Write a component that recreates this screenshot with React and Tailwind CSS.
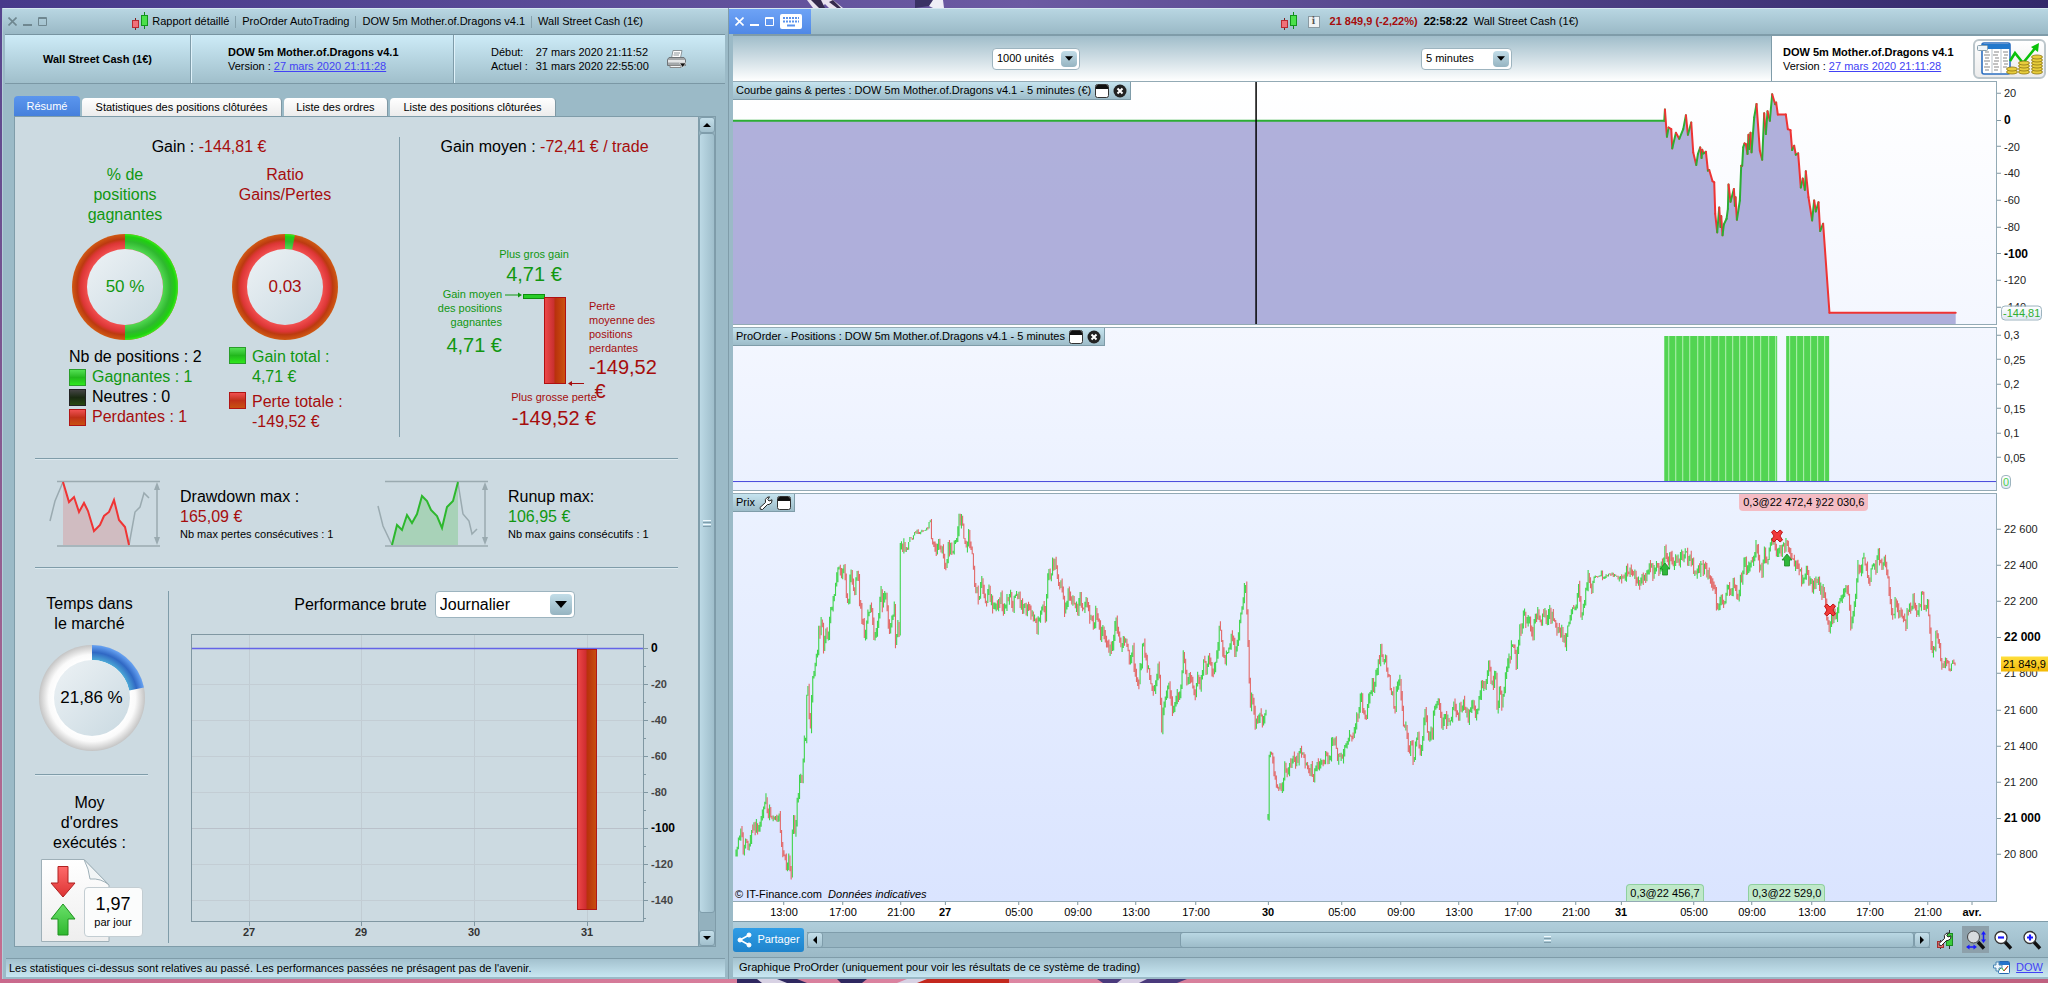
import React from "react";
import clsx from "clsx";

/* ---------------------------------------------------------------------------
   DATA
   --------------------------------------------------------------------------- */

const PLOT_W = 1264;

const timeTicks = [
  [51, "13:00"], [110, "17:00"], [168, "21:00"], [212, "27", true], [286, "05:00"],
  [345, "09:00"], [403, "13:00"], [463, "17:00"], [535, "30", true], [609, "05:00"],
  [668, "09:00"], [726, "13:00"], [785, "17:00"], [843, "21:00"], [888, "31", true],
  [961, "05:00"], [1019, "09:00"], [1079, "13:00"], [1137, "17:00"], [1195, "21:00"],
  [1239, "avr.", true],
];

const gainTicks = [20, 0, -20, -40, -60, -80, -100, -120, -140].map((v) => ({
  y: 39 - v * 1.335,
  label: String(v),
  bold: v === 0 || v === -100,
}));

const positionTicks = ["0,3", "0,25", "0,2", "0,15", "0,1", "0,05"].map((label, i) => ({
  y: 8 + i * 24.5,
  label,
}));

const priceTicks = [
  ["22 600", 36], ["22 400", 72], ["22 200", 108], ["22 000", 144, true], ["21 800", 180],
  ["21 600", 217], ["21 400", 253], ["21 200", 289], ["21 000", 325, true], ["20 800", 361],
].map(([label, y, bold]) => ({ label, y, bold }));

// equity curve, third-of-a-pixel units from the first trade
const equity = [
  [137, 86], [143, 168], [148, 140], [156, 145], [159, 203], [170, 156], [180, 174], [192, 145],
  [200, 103], [206, 162], [216, 125], [222, 215], [231, 253], [236, 220], [243, 200], [247, 232],
  [249, 207], [253, 218], [260, 213], [266, 270], [270, 268], [280, 302], [285, 305], [288, 400],
  [294, 456], [300, 381], [304, 440], [306, 407], [310, 465], [314, 432], [322, 415], [326, 385],
  [328, 312], [334, 364], [344, 325], [347, 376], [349, 350], [353, 418], [362, 360], [366, 255],
  [369, 255], [372, 200], [376, 188], [380, 190], [385, 220], [388, 162], [390, 205], [394, 156],
  [397, 215], [405, 110], [412, 69], [422, 210], [429, 237], [435, 97], [440, 160], [445, 91],
  [452, 120], [459, 40], [468, 70], [471, 65], [476, 101], [500, 101], [506, 145], [514, 148],
  [519, 208], [525, 195], [530, 222], [537, 218], [545, 321], [551, 294], [557, 328], [560, 272],
  [568, 350], [579, 420], [585, 360], [590, 393], [598, 365], [603, 452], [612, 430], [631, 698],
  [1010, 698],
];
const equityPoints = [[0, 39], [932, 39]].concat(equity.map(([x, y]) => [887 + x / 3, y / 3 - 1]));

// price path before the 30, between the 30 and its morning, then up to the end
const priceA = [
  38, 1120, 45, 1085, 48, 1050, 50, 1035, 56, 1110, 62, 1075, 66, 1100, 72, 1075, 76, 1040, 82, 1055,
  88, 1035, 93, 1055, 98, 1010, 104, 965, 108, 955, 113, 1000, 120, 990, 126, 1005, 132, 995, 138, 1005,
  142, 1010, 146, 1080, 150, 1110, 156, 1140, 160, 1180, 163, 1130, 167, 1150, 170, 1200, 171, 1090,
  174, 990, 179, 1060, 182, 990, 186, 940, 192, 870, 195, 900, 200, 790, 205, 760, 206, 650, 209, 630,
  214, 750, 218, 640, 222, 580, 224, 600, 228, 510, 231, 540, 234, 430, 238, 470, 242, 400, 247, 520,
  251, 450, 255, 490, 260, 420, 266, 380, 272, 350, 277, 300, 282, 260, 288, 290, 294, 250, 300, 340,
  303, 380, 308, 320, 312, 270, 317, 340, 322, 310, 328, 280, 333, 380, 338, 420, 345, 480, 350, 420,
  356, 370, 362, 390, 368, 480, 374, 440, 382, 330, 386, 380, 392, 330, 398, 400, 404, 460, 410, 410,
  415, 350, 417, 480, 422, 430, 426, 460, 427, 260, 429, 170, 433, 230, 436, 195, 440, 205, 446, 200,
  452, 165, 457, 175, 464, 150, 474, 155, 484, 148, 494, 140, 500, 115, 503, 180, 508, 170, 514, 200,
  520, 180, 526, 200, 533, 240, 538, 255, 544, 190, 552, 210, 560, 170, 566, 150, 570, 115, 576, 125,
  580, 160, 584, 195, 590, 170, 597, 210, 602, 250, 604, 310, 610, 320, 615, 375, 621, 300, 628, 330,
  634, 370, 640, 330, 648, 390, 654, 385, 660, 375, 668, 360, 674, 395, 682, 360, 688, 340, 696, 375,
  704, 325, 712, 355, 720, 375, 728, 380, 735, 385, 744, 400, 749, 430, 753, 450, 760, 420, 768, 385,
  774, 400, 778, 320, 782, 260, 786, 300, 790, 240, 798, 260, 805, 320, 812, 300, 820, 390, 830, 325,
  838, 360, 846, 380, 850, 400, 856, 340, 862, 395, 870, 370, 876, 385, 886, 430, 895, 395, 904, 460,
  912, 440, 920, 500, 928, 505, 935, 490, 940, 410, 948, 450, 952, 520, 960, 455, 966, 500, 974, 540,
  981, 500, 988, 590, 996, 595, 1002, 540, 1006, 480, 1012, 540, 1020, 580, 1030, 630, 1038, 600,
  1043, 560, 1047, 640, 1050, 755, 1055, 670, 1060, 650, 1066, 600, 1072, 670, 1080, 690, 1087, 640,
  1094, 640, 1098, 570, 1103, 510, 1108, 600, 1115, 570, 1122, 620, 1130, 650, 1136, 600, 1142, 610,
  1150, 550, 1156, 560, 1164, 530, 1172, 580, 1180, 550, 1184, 490, 1188, 440, 1194, 490, 1202, 540,
  1208, 490, 1218, 470, 1226, 530, 1232, 460, 1238, 400, 1244, 370, 1249, 305, 1252, 380, 1255, 480,
  1258, 580, 1261, 680, 1266, 650, 1272, 715, 1280, 705, 1288, 715, 1294, 700, 1300, 700,
];
const priceB = [
  1303, 1010, 1304, 860, 1306, 840, 1310, 820, 1315, 860, 1322, 900, 1328, 930, 1336, 910, 1342, 870,
  1350, 870, 1356, 850, 1364, 830, 1372, 845, 1378, 800, 1386, 810, 1394, 850, 1400, 860, 1412, 880,
  1420, 840, 1430, 840, 1440, 830, 1452, 820, 1456, 780, 1462, 790, 1468, 820, 1478, 830, 1486, 790,
  1494, 775, 1502, 780, 1510, 730, 1518, 690, 1524, 650, 1530, 700, 1538, 700, 1546, 620, 1554, 610,
  1562, 580, 1568, 550,
];
const priceC = [
  0, 530, 4, 500, 8, 550, 12, 520, 18, 560, 24, 600, 30, 640, 36, 680, 43, 600, 48, 600, 52, 660,
  57, 740, 62, 750, 70, 810, 74, 780, 79, 840, 84, 800, 90, 760, 94, 820, 100, 780, 103, 740, 107, 690,
  112, 740, 118, 780, 124, 750, 128, 680, 136, 670, 142, 690, 148, 750, 153, 690, 160, 730, 168, 720,
  174, 680, 180, 700, 186, 700, 196, 665, 202, 680, 209, 720, 216, 670, 224, 700, 230, 680, 238, 620,
  244, 600, 250, 610, 257, 560, 262, 600, 268, 600, 272, 560, 277, 710, 283, 620, 288, 680, 294, 600,
  300, 540, 306, 550, 310, 490, 316, 490, 321, 560, 326, 480, 330, 450, 336, 420, 340, 400, 346, 430,
  352, 425, 360, 470, 366, 410, 372, 400, 380, 425, 388, 390, 394, 420, 400, 400, 408, 410, 416, 450,
  422, 430, 430, 470, 436, 490, 442, 430, 450, 380, 454, 370, 460, 380, 468, 320, 474, 420, 479, 380,
  484, 330, 490, 280, 498, 320, 504, 290, 512, 290, 521, 275, 524, 295, 530, 285, 540, 280, 550, 283,
  560, 290, 568, 295, 574, 280, 582, 260, 588, 260, 596, 285, 606, 310, 614, 300, 620, 280, 628, 280,
  636, 250, 642, 270, 650, 260, 658, 265, 666, 245, 670, 215, 676, 225, 684, 240, 690, 260, 696, 240,
  704, 245, 712, 230, 720, 220, 728, 240, 733, 230, 738, 270, 744, 280, 752, 260, 760, 265, 768, 270,
  776, 290, 784, 300, 790, 360, 793, 380, 798, 350, 806, 370, 812, 370, 818, 320, 826, 330, 832, 310,
  840, 360, 846, 320, 852, 270, 858, 245, 864, 270, 870, 240, 876, 250, 884, 200, 892, 240, 898, 280,
  904, 220, 912, 230, 922, 190, 928, 180, 934, 215, 940, 210, 948, 210, 956, 190, 964, 210, 970, 240,
  978, 240, 986, 270, 992, 300, 1002, 270, 1010, 300, 1018, 320, 1028, 300, 1036, 330, 1044, 330,
  1050, 400, 1057, 450, 1062, 390, 1070, 420, 1078, 380, 1086, 330, 1094, 320, 1102, 350, 1108, 440,
  1114, 390, 1120, 300, 1125, 240, 1130, 280, 1136, 220, 1144, 260, 1150, 300, 1158, 240, 1166, 260,
  1170, 220, 1178, 240, 1186, 240, 1194, 290, 1200, 370, 1206, 410, 1212, 360, 1220, 390, 1230, 400,
  1234, 440, 1240, 390, 1248, 380, 1254, 360, 1262, 410, 1270, 360, 1275, 345, 1282, 380, 1288, 350,
  1292, 450, 1300, 520, 1308, 450, 1314, 480, 1320, 540, 1328, 540, 1334, 540, 1340, 575, 1344, 540,
  1352, 550,
];

const toPath = (flat, x0, k) => {
  const out = [];
  for (let i = 0; i < flat.length; i += 2) out.push([x0 + flat[i] / k, flat[i + 1] / 3 - 13]);
  return out;
};

const noise = (n) => {
  const s = Math.sin(n * 127.1) * 43758.5453;
  return s - Math.floor(s);
};

// one candle every 1.2 units, walked along the price path
const buildCandles = (path) => {
  let up = "";
  let down = "";
  let seg = 0;
  let prev = path[0][1];
  const last = path[path.length - 1][0];
  for (let x = path[0][0], i = 1; x <= last; x += 1.2, i += 1) {
    while (seg < path.length - 2 && path[seg + 1][0] < x) seg += 1;
    const [xa, ya] = path[seg];
    const [xb, yb] = path[seg + 1];
    const t = Math.min(1, Math.max(0, (x - xa) / (xb - xa)));
    const calm = (x > 172 && x < 198) || (x > 860 && x < 886) || x > 1215;
    const amp = calm ? 3 : 11;
    const close = ya + (yb - ya) * t + (noise(i + path[0][0]) - 0.5) * amp;
    const hi = Math.min(prev, close) - noise(i * 3.7) * amp * 0.5;
    const lo = Math.max(prev, close) + noise(i * 5.3) * amp * 0.5;
    const d = `M${x.toFixed(1)} ${hi.toFixed(1)}V${lo.toFixed(1)}`;
    if (close <= prev) up += d;
    else down += d;
    prev = close;
  }
  return { up, down };
};

const candles = [toPath(priceA, -13, 2.376), toPath(priceB, -13, 2.376), toPath(priceC, 647, 2.347)].map(buildCandles);

const pct = (v, total) => `${(v / total) * 100}%`;

/* ---------------------------------------------------------------------------
   ICONS
   --------------------------------------------------------------------------- */

const CandlesIcon = () => (
  <svg width="17" height="19" viewBox="0 0 17 19">
    <path d="M3.5 6V18" stroke="#7a2020" />
    <path d="M12.500 0V17" stroke="#0f8a1c" />
    <rect x="0.500" y="8.500" width="6" height="7" fill="#f07078" stroke="#b82a30" />
    <rect x="9.500" y="3.500" width="6" height="10" fill="#4be04b" stroke="#12951c" />
  </svg>
);

const WindowControls = ({ active }) => (
  <div className={clsx("flex items-center gap-[6px]", active ? "text-white" : "text-[#6f8790]")}>
    <button type="button" aria-label="Fermer">
      <svg width="9" height="9" viewBox="0 0 9 9" stroke="currentColor" strokeWidth="1.6"><path d="M0.500 0.500L8.500 8.500M8.500 0.500L0.500 8.500" /></svg>
    </button>
    <button type="button" aria-label="Réduire">
      <svg width="9" height="9" viewBox="0 0 9 9" stroke="currentColor" strokeWidth="2"><path d="M0 8H9" /></svg>
    </button>
    <button type="button" aria-label="Agrandir">
      <svg width="9" height="9" viewBox="0 0 9 9" stroke="currentColor" fill="none"><path d="M0.500 0.500H8.500V8.500H0.500ZM0 1.500H9" /></svg>
    </button>
    {active && (
      <button type="button" aria-label="Clavier">
        <svg width="22" height="15" viewBox="0 0 22 15">
          <rect width="22" height="15" rx="2" fill="#fff" />
          <path d="M3 4H19M3 7.500H19" stroke="#5b93ec" strokeWidth="2" strokeDasharray="2 1" />
          <path d="M7 11.500H15" stroke="#5b93ec" strokeWidth="2" />
        </svg>
      </button>
    )}
  </div>
);

const PrinterIcon = () => (
  <svg width="20" height="19" viewBox="0 0 20 19">
    <path d="M6 0.500H15L13.500 8H4.500Z" fill="#fff" stroke="#8b9499" />
    <path d="M7 3H13M6.500 5H12" stroke="#8b9499" />
    <path d="M2 7.500H17L18.500 9.500V15.500H0.500V9.500Z" fill="#a4a8aa" stroke="#6e7478" />
    <path d="M1 10H18V12.500H1Z" fill="#e3e5e6" />
    <path d="M3 15.500H14V17.500H3Z" fill="#f4f4f4" stroke="#888" />
    <path d="M12.500 13H19L15.700 17.500Z" fill="#111" stroke="#fff" strokeWidth="0.600" />
  </svg>
);

const PaneIcon = () => (
  <svg width="14" height="14" viewBox="0 0 14 14">
    <rect x="0.500" y="0.500" width="13" height="13" rx="2" fill="#fff" stroke="#333" />
    <path d="M1 2.500Q1 1 2.500 1H11.500Q13 1 13 2.500V5H1Z" fill="#111" />
  </svg>
);

const CloseDot = () => (
  <svg width="14" height="14" viewBox="0 0 14 14">
    <circle cx="7" cy="7" r="6.500" fill="#222" />
    <path d="M4.500 4.500L9.500 9.500M9.500 4.500L4.500 9.500" stroke="#fff" strokeWidth="2" />
  </svg>
);

const WrenchShape = () => (
  <path d="M1 11.500L6.500 6.500Q5.500 3 8 1.500L10.500 0.800L8.800 3.500L10 5L13 3.800Q13.500 7.500 10 8.500L8.500 8.500L3.500 13.500Q0.500 14 1 11.500Z" fill="#fff" stroke="#222" />
);

const Magnifier = ({ sign }) => (
  <svg width="20" height="20" viewBox="0 0 20 20">
    <path d="M12 12L18 18.500" stroke="#111" strokeWidth="3.400" />
    <circle cx="8" cy="7.500" r="6" fill="#fff" stroke="#333" strokeWidth="1.300" />
    <path d={sign === "+" ? "M5 7.500H11M8 4.500V10.500" : "M5 7.500H11"} stroke="#1a1aff" strokeWidth="2.200" />
  </svg>
);

const ReportIcon = () => (
  <svg width="66" height="34" viewBox="0 0 66 34">
    <rect x="5" y="1" width="28" height="31" rx="2" fill="#fff" stroke="#2c6fc0" strokeWidth="1.600" />
    <path d="M5 2H33V7H5Z" fill="#2278cc" />
    <path d="M15 7V31M24 7V31" stroke="#b9c3ca" />
    <path d="M8 10H12M7 13H13M8 16H12M7 19H13M8 22H11M7 25H13M8 28H12M17 10H22M16 13H21M18 16H22M17 19H22M16 22H21M17 25H22M17 28H21M26 10H31M27 13H31M26 16H30M26 19H31M27 22H31M26 25H30" stroke="#888" strokeWidth="1.200" />
    <rect x="0.500" y="3.500" width="10" height="5" rx="1" fill="#eef4f8" stroke="#8aa0ac" />
    <path d="M33 19L38 11L46 21L59 5" fill="none" stroke="#0ac20a" strokeWidth="2.600" />
    <path d="M62 1L61 10L54 5Z" fill="#0ac20a" />
    {[[35, 31], [35, 28], [47, 31], [47, 28], [47, 25], [47, 22], [60, 31], [60, 28], [60, 25], [60, 22], [60, 19], [60, 16]].map(([x, y]) => (
      <ellipse key={`${x}-${y}`} cx={x} cy={y - 1} rx="5.500" ry="2" fill="#e8cd3c" stroke="#8a7413" strokeWidth="0.800" />
    ))}
  </svg>
);

const Donut = ({ id, share, inner, outer, children }) => {
  const a = share * Math.PI * 2;
  const p = (r, t) => `${54 + r * Math.sin(t)} ${54 - r * Math.cos(t)}`;
  return (
    <div className="relative h-[108px] w-[108px]">
      <svg width="108" height="108" viewBox="0 0 108 108">
        <defs>
          <radialGradient id={`${id}-base`} gradientUnits="userSpaceOnUse" cx="54" cy="54" r="53">
            {outer.map(([o, c]) => <stop key={o} offset={o} stopColor={c} />)}
          </radialGradient>
          <radialGradient id={`${id}-part`} gradientUnits="userSpaceOnUse" cx="54" cy="54" r="53">
            {inner.map(([o, c]) => <stop key={o} offset={o} stopColor={c} />)}
          </radialGradient>
          <linearGradient id={`${id}-disc`} x1="0" y1="0" x2="1" y2="1">
            <stop offset="0" stopColor="#edf2f5" />
            <stop offset="1" stopColor="#c9d9e1" />
          </linearGradient>
        </defs>
        <circle cx="54" cy="54" r="53" fill={`url(#${id}-base)`} />
        <path d={`M${p(38, 0)}L${p(53, 0)}A53 53 0 0 1 ${p(53, a)}L${p(38, a)}A38 38 0 0 0 ${p(38, 0)}Z`} fill={`url(#${id}-part)`} />
        <circle cx="54" cy="54" r="38" fill={`url(#${id}-disc)`} />
      </svg>
      <div className="absolute inset-0 flex items-center justify-center text-[17px]">{children}</div>
    </div>
  );
};

const redRing = [[0.7, "#f45252"], [0.84, "#dc3636"], [0.9, "#bc3a10"], [1, "#d05a14"]];
const greenRing = [[0.7, "#56dc56"], [0.86, "#2fb82f"], [0.95, "#1fd010"], [1, "#3cec20"]];
const whiteRing = [[0.7, "#ffffff"], [0.82, "#fafafa"], [1, "#c4c4c4"]];
const blueRing = [[0.7, "#4fb0d8"], [0.86, "#3068c4"], [1, "#68a4f4"]];

/* ---------------------------------------------------------------------------
   SHARED PARTS
   --------------------------------------------------------------------------- */

const Select = ({ label, value, className, big }) => (
  <div className={clsx("relative rounded border border-[#9db4bf] bg-white", big ? "h-[27px]" : "h-[22px]", className)}>
    <select aria-label={label} className={clsx("h-full w-full appearance-none bg-transparent text-black outline-none", big ? "pl-1 text-[16px]" : "pl-1 text-[11px]")}>
      <option>{value}</option>
    </select>
    <div className={clsx("pointer-events-none absolute top-[2px] right-[2px] bottom-[2px] flex items-center justify-center rounded-sm bg-linear-to-b from-[#c2dde8] to-[#96b4c1]", big ? "w-[22px]" : "w-4")}>
      <svg width={big ? 12 : 8} height={big ? 7 : 5} viewBox="0 0 12 7"><path d="M0 0H12L6 7Z" /></svg>
    </div>
  </div>
);

const arrows = { up: "M0 5H8L4 1Z", down: "M0 1H8L4 5Z", left: "M6 -1V7L2 3Z", right: "M2 -1V7L6 3Z" };
const ScrollButton = ({ dir }) => (
  <button type="button" aria-label={dir} className="flex h-4 w-4 shrink-0 items-center justify-center rounded-[3px] border border-[#7f9dab] bg-linear-to-b from-[#c4dfea] to-[#a2c0cd]">
    <svg width="8" height="6" viewBox="0 0 8 6" className="overflow-visible"><path d={arrows[dir]} /></svg>
  </button>
);

const Rule = ({ className }) => <div className={clsx("border-t border-b border-t-[#7f9ca9] border-b-[#dce9ef]", className)} />;

const Swatch = ({ color }) => (
  <span
    className={clsx(
      "h-[17px] w-[17px] shrink-0 border",
      color === "green" && "border-[#2a9d2a] bg-linear-to-b from-[#52e052] via-[#22b81c] to-[#2ee81c]",
      color === "black" && "border-[#222] bg-linear-to-b from-[#444] via-[#1a2a12] to-[#28480f]",
      color === "red" && "border-[#b01515] bg-linear-to-b from-[#f05050] via-[#c03018] to-[#c85010]"
    )}
  />
);

/* ---------------------------------------------------------------------------
   LEFT WINDOW: DETAILED REPORT
   --------------------------------------------------------------------------- */

const ReportHeader = () => (
  <>
    <div className="flex h-[26px] shrink-0 items-center border-t border-[#d5e8f0] bg-linear-to-b from-[#b8d6e2] to-[#9ab9c6] pl-[5px]">
      <WindowControls />
      <div className="flex flex-1 items-center justify-center gap-[6px]">
        <span className="flex items-center"><CandlesIcon />&nbsp;Rapport détaillé</span>
        <span className="h-3 w-px bg-[#86a2ae]" />
        <span>ProOrder AutoTrading</span>
        <span className="h-3 w-px bg-[#86a2ae]" />
        <span>DOW 5m Mother.of.Dragons v4.1</span>
        <span className="h-3 w-px bg-[#86a2ae]" />
        <span>Wall Street Cash (1€)</span>
      </div>
    </div>
    <div className="mr-[3px] ml-[2px] flex h-[50px] shrink-0 border-t border-b border-t-[#7794a1] border-b-[#7b98a5] bg-linear-to-b from-[#cdebf7] to-[#a0bfcb]">
      <div className="flex w-[186px] items-center justify-center border-r border-[#7f9ca9] font-bold">Wall Street Cash (1€)</div>
      <div className="flex w-[263px] items-center border-r border-l border-r-[#7f9ca9] border-l-[#dff2fa] pl-9">
        <div className="leading-[14px]">
          <div className="font-bold">DOW 5m Mother.of.Dragons v4.1</div>
          <div>Version : <a href="#version" className="text-[#4242f5] underline">27 mars 2020 21:11:28</a></div>
        </div>
      </div>
      <div className="flex flex-1 items-center gap-[18px] border-l border-[#dff2fa] pl-9">
        <div className="grid grid-cols-[auto_auto] gap-x-2 leading-[14px]">
          <span>Début:</span><span>27 mars 2020 21:11:52</span>
          <span>Actuel :</span><span>31 mars 2020 22:55:00</span>
        </div>
        <button type="button" aria-label="Imprimer"><PrinterIcon /></button>
      </div>
    </div>
  </>
);

const Tabs = () => (
  <div role="tablist" className="mt-3 mr-3 ml-[11px] flex h-5 shrink-0 items-end gap-[2px]">
    <button type="button" role="tab" className="h-5 w-[66px] rounded-t bg-linear-to-b from-[#5b96ee] to-[#4680dc] text-white">Résumé</button>
    <button type="button" role="tab" className="h-[18px] w-[200px] rounded-t border-r border-[#7f98a4] bg-linear-to-b from-white to-[#ececec]">Statistiques des positions clôturées</button>
    <button type="button" role="tab" className="h-[18px] w-[104px] rounded-t border-r border-[#7f98a4] bg-linear-to-b from-white to-[#ececec]">Liste des ordres</button>
    <button type="button" role="tab" className="h-[18px] w-[166px] rounded-t border-r border-[#7f98a4] bg-linear-to-b from-white to-[#ececec]">Liste des positions clôturées</button>
  </div>
);

const GainSection = () => (
  <div className="w-96 shrink-0 pt-5">
    <div className="pl-1 text-center">Gain : <span className="text-[#a60d0d]">-144,81 €</span></div>
    <div className="mt-2 flex pl-[30px]">
      <div className="flex w-40 flex-col">
        <div className="h-[68px] text-center text-[#119711]">% de<br />positions<br />gagnantes</div>
        <div className="flex justify-center text-[#119711]">
          <Donut id="win" share={0.5} outer={redRing} inner={greenRing}>50 %</Donut>
        </div>
        <div className="mt-[6px] pl-6 whitespace-nowrap">
          <div>Nb de positions : 2</div>
          <div className="flex items-center gap-[6px] text-[#119711]"><Swatch color="green" />Gagnantes : 1</div>
          <div className="flex items-center gap-[6px]"><Swatch color="black" />Neutres : 0</div>
          <div className="flex items-center gap-[6px] text-[#a60d0d]"><Swatch color="red" />Perdantes : 1</div>
        </div>
      </div>
      <div className="flex w-40 flex-col">
        <div className="h-[68px] text-center text-[#a60d0d]">Ratio<br />Gains/Pertes</div>
        <div className="flex justify-center text-[#a60d0d]">
          <Donut id="ratio" share={0.03} outer={redRing} inner={greenRing}>0,03</Donut>
        </div>
        <div className="mt-[6px] flex flex-col gap-[5px] pl-6 whitespace-nowrap">
          <div className="flex items-start gap-[6px] text-[#119711]"><Swatch color="green" /><span>Gain total :<br />4,71 €</span></div>
          <div className="flex items-start gap-[6px] text-[#a60d0d]"><Swatch color="red" /><span>Perte totale :<br />-149,52 €</span></div>
        </div>
      </div>
    </div>
  </div>
);

const AverageSection = () => (
  <div className="mt-5 h-[300px] w-[298px] border-l border-[#7f9ca9] text-[11px] leading-[14px]">
    <div className="pr-2 text-center text-[16px] leading-5">Gain moyen : <span className="text-[#a60d0d]">-72,41 € / trade</span></div>
    <div className="mt-[90px] w-[268px] text-center text-[#119711]">
      <div>Plus gros gain</div>
      <div className="text-[20px] leading-[26px]">4,71 €</div>
    </div>
    <div className="flex">
      <div className="w-[102px] text-right text-[#119711]">
        Gain moyen<br />des positions<br />gagnantes
        <div className="text-[20px] leading-[32px]">4,71 €</div>
      </div>
      <svg width="87" height="104" viewBox="0 0 87 104">
        <defs>
          <linearGradient id="loss-bar">
            <stop offset="0" stopColor="#ee4848" />
            <stop offset="0.450" stopColor="#c83030" />
            <stop offset="0.500" stopColor="#b8300c" />
            <stop offset="1" stopColor="#cc5410" />
          </linearGradient>
        </defs>
        <path d="M3 8H17" stroke="#119711" />
        <path d="M16 5.500L20 8L16 10.500Z" fill="#119711" />
        <rect x="21.500" y="7.500" width="21" height="4" fill="#28cc28" stroke="#0f8f0f" />
        <rect x="42.500" y="10.500" width="21" height="86" fill="url(#loss-bar)" stroke="#b01010" />
        <path d="M69 96.500H82" stroke="#a60d0d" />
        <path d="M70 94L66 96.500L70 99Z" fill="#a60d0d" />
      </svg>
      <div className="w-20 pt-3 text-[#a60d0d]">
        Perte<br />moyenne des<br />positions<br />perdantes
        <div className="text-[20px] leading-6">-149,52<br />&nbsp;€</div>
      </div>
    </div>
    <div className="-mt-[13px] w-[308px] text-center text-[#a60d0d]">
      <div>Plus grosse perte</div>
      <div className="text-[20px] leading-[28px]">-149,52 €</div>
    </div>
  </div>
);

const DrawdownIcon = () => (
  <svg width="111" height="68" viewBox="0 0 111 68" fill="none">
    <path d="M8 1.500H111M8 66H111M108 5V62" stroke="#9aaab0" strokeWidth="1.500" />
    <path d="M105 10L108 2L111 10ZM105 57L108 65L111 57Z" fill="#9aaab0" />
    <path d="M1 41L6 21L14 2M80 65L86 32L91 27L95 13L100 18" stroke="#9aaab0" strokeWidth="1.500" />
    <path d="M14 2L20 22L25 17L30 32L35 23L39 31L45 51L51 45L55 36L60 32L65 20L70 40L76 47L80 65H14Z" fill="#e05050" fillOpacity="0.220" />
    <path d="M14 2L20 22L25 17L30 32L35 23L39 31L45 51L51 45L55 36L60 32L65 20L70 40L76 47L80 65" stroke="#f03434" strokeWidth="2" />
  </svg>
);

const RunupIcon = () => (
  <svg width="111" height="68" viewBox="0 0 111 68" fill="none">
    <path d="M8 1.500H111M8 66H111M108 5V62" stroke="#9aaab0" strokeWidth="1.500" />
    <path d="M105 10L108 2L111 10ZM105 57L108 65L111 57Z" fill="#9aaab0" />
    <path d="M1 26L6 46L15 65M81 3L86 34L92 41L95 54L100 49" stroke="#9aaab0" strokeWidth="1.500" />
    <path d="M15 65L20 45L25 50L30 35L35 43L40 34L45 16L50 21L54 30L60 36L65 48L70 27L76 21L81 2V65Z" fill="#28b828" fillOpacity="0.220" />
    <path d="M15 65L20 45L25 50L30 35L35 43L40 34L45 16L50 21L54 30L60 36L65 48L70 27L76 21L81 2" stroke="#2db82d" strokeWidth="2" />
  </svg>
);

const ExtremesSection = () => (
  <div className="flex h-[107px] items-center pl-[34px] whitespace-nowrap">
    <DrawdownIcon />
    <div className="w-[197px] shrink-0 pl-5">
      <div>Drawdown max :</div>
      <div className="text-[#a60d0d]">165,09 €</div>
      <div className="text-[11px] leading-[14px]">Nb max pertes consécutives : 1</div>
    </div>
    <div className="ml-5"><RunupIcon /></div>
    <div className="pl-5">
      <div>Runup max:</div>
      <div className="text-[#119711]">106,95 €</div>
      <div className="text-[11px] leading-[14px]">Nb max gains consécutifs : 1</div>
    </div>
  </div>
);

const OrdersIcon = () => (
  <div className="relative h-[84px] w-[102px]">
    <svg width="102" height="84" viewBox="0 0 102 84">
      <defs>
        <linearGradient id="sheet" x2="0" y2="1"><stop stopColor="#fff" /><stop offset="1" stopColor="#eee" /></linearGradient>
        <linearGradient id="down-arrow" x2="0" y2="1"><stop stopColor="#ff6a6a" /><stop offset="1" stopColor="#dc3434" /></linearGradient>
        <linearGradient id="up-arrow" x2="0" y2="1"><stop stopColor="#6ae06a" /><stop offset="1" stopColor="#2fb82f" /></linearGradient>
      </defs>
      <path d="M0.500 0.500H43L68 26V82.500H0.500Z" fill="url(#sheet)" stroke="#9fb0b8" />
      <path d="M43 0.500Q48 10 49 20Q60 19 68 26Z" fill="#f2f5f6" stroke="#9fb0b8" />
      <path d="M17 7.500H27V24H34L22 38L10 24H17Z" fill="url(#down-arrow)" stroke="#b02020" />
      <path d="M17 76H27V60H34L22 45L10 60H17Z" fill="url(#up-arrow)" stroke="#1e921e" />
    </svg>
    <div className="absolute right-0 bottom-[6px] flex h-[50px] w-[59px] flex-col items-center justify-center rounded border border-[#c3cdd2] bg-[#fbfcfc]">
      <span className="text-[18px] leading-5">1,97</span>
      <span className="text-[11px] leading-4">par jour</span>
    </div>
  </div>
);

const dailyTicks = [0, -20, -40, -60, -80, -100, -120, -140];
const dailyDays = [["27", 58], ["29", 170], ["30", 283], ["31", 396]];

const DailyChart = () => (
  <div className="mt-4 ml-[22px] flex text-[11px] leading-3 text-[#333]">
    <div className="w-[453px]">
      <svg width="453" height="292" viewBox="0 0 453 292" className="overflow-visible">
        <defs>
          <linearGradient id="day-bar">
            <stop offset="0" stopColor="#ee4848" />
            <stop offset="0.450" stopColor="#cf2c30" />
            <stop offset="0.500" stopColor="#b8300c" />
            <stop offset="1" stopColor="#c8500e" />
          </linearGradient>
        </defs>
        {dailyDays.map(([d, x]) => <path key={d} d={`M${x + 0.5} 1V292`} stroke="#c1ccd3" />)}
        {dailyTicks.map((v) => <path key={v} d={`M1 ${14.5 - v * 1.8}H452`} stroke={v === -100 ? "#bac1ca" : "#c3cdd4"} />)}
        <rect x="0.500" y="0.500" width="452" height="287" fill="none" stroke="#8097a2" />
        {dailyTicks.map((v) => <path key={v} d={`M453 ${14.5 - v * 1.8}H457M453 ${32.5 - v * 1.8}H455`} stroke="#8097a2" />)}
        {dailyDays.map(([d, x]) => <path key={d} d={`M${x + 0.5} 288V292`} stroke="#8097a2" />)}
        <path d="M1 14.500H452" stroke="#6464e8" strokeWidth="1.500" />
        <rect x="386.500" y="15.500" width="19" height="260" fill="url(#day-bar)" stroke="#b01818" />
      </svg>
      <div className="relative h-3 font-bold">
        {dailyDays.map(([d, x]) => (
          <span key={d} className="absolute top-0 -translate-x-1/2" style={{ left: x }}>{d}</span>
        ))}
      </div>
    </div>
    <div className="relative w-10">
      {dailyTicks.map((v) => (
        <span key={v} className={clsx("absolute left-[7px] -translate-y-1/2 font-bold", v === 0 || v === -100 ? "text-[12px] text-black" : "text-[#444]")} style={{ top: 14 - v * 1.8 }}>{v}</span>
      ))}
    </div>
  </div>
);

const ReportWindow = () => (
  <section className="flex w-[726px] shrink-0 flex-col border-l border-[#b4cdd8] bg-[#9bbac7]">
    <ReportHeader />
    <Tabs />
    <div className="mr-3 ml-[11px] flex min-h-0 flex-1 border border-[#7f9ca9] bg-[#ccdae1]">
      <div className="min-w-0 flex-1 overflow-hidden text-[16px] leading-5">
        <div className="flex h-[341px]">
          <GainSection />
          <AverageSection />
        </div>
        <Rule className="mr-5 ml-5" />
        <ExtremesSection />
        <Rule className="mr-5 ml-5" />
        <div className="mt-[22px] flex">
          <div className="flex w-[154px] shrink-0 flex-col items-center border-r border-[#7f9ca9]">
            <div className="pt-[3px] pr-1 text-center">Temps dans<br />le marché</div>
            <div className="mt-[10px]">
              <Donut id="time" share={0.2186} outer={whiteRing} inner={blueRing}>21,86 %</Donut>
            </div>
            <Rule className="mt-[22px] w-[113px]" />
            <div className="mt-[17px] mb-[6px] pr-1 text-center">Moy<br />d'ordres<br />exécutés :</div>
            <OrdersIcon />
          </div>
          <div className="min-w-0 flex-1">
            <div className="flex items-center justify-center gap-2 pl-[2px]">
              <span>Performance brute</span>
              <Select big label="Performance brute" value="Journalier" className="w-[140px]" />
            </div>
            <DailyChart />
          </div>
        </div>
      </div>
      <div className="flex w-[17px] flex-col items-center border-l border-[#7f9ca9] bg-[#93b1be]">
        <ScrollButton dir="up" />
        <div className="mb-[17px] flex w-4 flex-1 flex-col items-center justify-center gap-px rounded-[3px] border border-[#7f9dab] bg-linear-to-r from-[#bcd9e5] to-[#9fbecb]">
          <span className="h-px w-2 bg-[#eef8fc]" /><span className="h-px w-2 bg-[#7f9dab]" />
          <span className="h-px w-2 bg-[#eef8fc]" /><span className="h-px w-2 bg-[#7f9dab]" />
        </div>
        <ScrollButton dir="down" />
      </div>
    </div>
    <footer className="mx-[3px] mt-[11px] mb-[2px] flex h-[19px] shrink-0 items-center border-t border-[#7f9ca9] bg-linear-to-b from-[#a3c1ce] to-[#c8e7f2] pl-[3px]">
      Les statistiques ci-dessus sont relatives au passé. Les performances passées ne présagent pas de l'avenir.
    </footer>
  </section>
);

/* ---------------------------------------------------------------------------
   RIGHT WINDOW: CHARTS
   --------------------------------------------------------------------------- */

const Axis = ({ ticks, total, children }) => (
  <div className="relative overflow-hidden bg-white">
    {ticks.map((t) => (
      <div key={t.label} className="absolute left-0 flex -translate-y-1/2 items-center gap-[3px] whitespace-nowrap" style={{ top: pct(t.y, total) }}>
        <span className="h-px w-1 bg-[#8097a2]" />
        <span className={clsx(t.bold ? "text-[12px] font-bold" : "text-[11px] text-[#222]")}>{t.label}</span>
      </div>
    ))}
    {children}
  </div>
);

const PaneTitle = ({ children }) => (
  <div className="absolute top-0 left-0 flex h-[18px] items-center gap-1 border-r border-b border-[#7f9ca9] bg-linear-to-b from-[#c6e4ef] to-[#9dbcc9] px-[3px] whitespace-nowrap">
    {children}
  </div>
);

const EquityPane = () => (
  <>
    <div className="relative min-h-0 border-t border-r border-b border-[#93aab5] bg-linear-to-b from-white to-[#f4f7ff]">
      <svg className="absolute inset-0 h-full w-full" viewBox={`0 0 ${PLOT_W} 243`} preserveAspectRatio="none">
        <path d={`M0 243L${equityPoints.map((p) => p.join(" ")).join("L")}V243Z`} fill="#9c9cd2" fillOpacity="0.800" />
        {equityPoints.slice(1).map(([x, y], i) => {
          const [px, py] = equityPoints[i];
          const rising = y < py || i === 0;
          return <path key={i} d={`M${px} ${py}L${x} ${y}`} stroke={rising ? "#2cae34" : "#ee3434"} strokeWidth="2" strokeLinecap="round" />;
        })}
        <path d="M523.500 0V243" stroke="#000" strokeWidth="1.500" />
      </svg>
      <PaneTitle>
        <span>Courbe gains &amp; pertes : DOW 5m Mother.of.Dragons v4.1 - 5 minutes (€)</span>
        <button type="button" aria-label="Agrandir le panneau"><PaneIcon /></button>
        <button type="button" aria-label="Fermer le panneau"><CloseDot /></button>
      </PaneTitle>
    </div>
    <Axis ticks={gainTicks} total={244}>
      <span className="absolute left-1 -translate-y-1/2 rounded-sm border border-[#9db4bf] bg-linear-to-b from-white to-[#dfe7f4] px-px leading-[13px] text-[#2fae2f]" style={{ top: pct(232, 244) }}>-144,81</span>
    </Axis>
  </>
);

const stripes = [148, 167, 190, 211, 233, 255, 274, 297, 319, 340, 359, 381, 403, 424, 446, 467, 509, 530, 551, 572, 593, 614];

const PositionPane = () => (
  <>
    <div className="relative min-h-0 border-t border-r border-b border-[#93aab5] bg-linear-to-b from-[#f4f7ff] to-[#ebf1ff]">
      <svg className="absolute inset-0 h-full w-full" viewBox={`0 0 ${PLOT_W} 163`} preserveAspectRatio="none">
        <path d="M932 8H1045V154H932ZM1054 8H1097V154H1054Z" fill="#52d452" />
        {stripes.map((s) => <path key={s} d={`M${887.5 + Math.round(s / 3)} 8V154`} stroke="#b4f2b4" />)}
        <path d="M0 154.500H1264" stroke="#4646dc" />
      </svg>
      <PaneTitle>
        <span>ProOrder - Positions : DOW 5m Mother.of.Dragons v4.1 - 5 minutes</span>
        <button type="button" aria-label="Agrandir le panneau"><PaneIcon /></button>
        <button type="button" aria-label="Fermer le panneau"><CloseDot /></button>
      </PaneTitle>
    </div>
    <Axis ticks={positionTicks} total={164}>
      <span className="absolute left-1 -translate-y-1/2 rounded-sm border border-[#9db4bf] bg-linear-to-b from-white to-[#dfe7f4] px-px leading-3 text-[#4fd04f]" style={{ top: pct(155, 164) }}>0</span>
    </Axis>
  </>
);

const Marker = ({ x, y, kind }) => (
  <svg width="13" height="14" viewBox="0 0 13 14" className="absolute -translate-x-1/2 -translate-y-1/2" style={{ left: pct(x, PLOT_W), top: pct(y, 408) }}>
    {kind === "exit"
      ? <path d="M1 3L3.500 1L6.500 4L9.500 1L12 3L9.500 7L12 11L9.500 13L6.500 10L3.500 13L1 11L3.500 7Z" fill="#f03a3a" stroke="#c01818" />
      : <path d="M6.500 1L11.500 7H9V13H4V7H1.500Z" fill="#2fb83a" stroke="#1a8a22" strokeWidth="0.800" />}
  </svg>
);

const PricePane = () => (
  <>
    <div className="relative min-h-0 border-t border-r border-b border-[#93aab5] bg-linear-to-b from-[#ecf2ff] to-[#dae4ff]">
      <svg className="absolute inset-0 h-full w-full" viewBox={`0 0 ${PLOT_W} 407`} preserveAspectRatio="none" fill="none">
        {candles.map((c, i) => (
          <g key={i} strokeWidth="1.100">
            <path d={c.up} stroke="#3fd44c" />
            <path d={c.down} stroke="#e26868" />
          </g>
        ))}
      </svg>
      <Marker kind="exit" x={1045} y={42} />
      <Marker kind="exit" x={1098} y={116} />
      <Marker kind="entry" x={933} y={75} />
      <Marker kind="entry" x={1055} y={66} />
      <span className="absolute top-0 rounded-b bg-[#f4bcc4] px-1 leading-[17px]" style={{ left: pct(1059, PLOT_W) }}>0,3@22 030,6</span>
      <span className="absolute top-0 rounded-b bg-[#f4bcc4] px-1 leading-[17px]" style={{ left: pct(1007, PLOT_W) }}>0,3@22 472,4</span>
      <span className="absolute bottom-0 rounded-t border border-b-0 border-[#8fd09f] bg-[#bfe8c9] px-[3px] leading-4" style={{ left: pct(894, PLOT_W) }}>0,3@22 456,7</span>
      <span className="absolute bottom-0 rounded-t border border-b-0 border-[#8fd09f] bg-[#bfe8c9] px-[3px] leading-4" style={{ left: pct(1016, PLOT_W) }}>0,3@22 529,0</span>
      <div className="absolute bottom-0 left-[2px] leading-[14px]">© IT-Finance.com&nbsp; <em>Données indicatives</em></div>
      <PaneTitle>
        <span>Prix</span>
        <button type="button" aria-label="Réglages"><svg width="14" height="14" viewBox="0 0 14 14"><WrenchShape /></svg></button>
        <button type="button" aria-label="Agrandir le panneau"><PaneIcon /></button>
      </PaneTitle>
    </div>
    <Axis ticks={priceTicks} total={409}>
      <span className="absolute left-1 -translate-y-1/2 bg-linear-to-b from-[#ffdf3a] to-[#f2b800] px-[2px] leading-[15px] whitespace-nowrap" style={{ top: pct(171, 409) }}>21 849,9</span>
    </Axis>
  </>
);

const ChartWindow = () => (
  <section className="flex min-w-0 flex-1 flex-col border-l border-[#7f9ca9] bg-[#9bbac7]">
    <div className="flex h-[26px] shrink-0 items-stretch border-t border-[#d5e8f0] bg-linear-to-b from-[#b8d6e2] to-[#9ab9c6]">
      <div className="flex w-[82px] items-center bg-linear-to-b from-[#6ea3f6] to-[#4f88e6] pl-[6px]"><WindowControls active /></div>
      <div className="flex flex-1 items-center justify-center gap-[6px]">
        <CandlesIcon />
        <span className="mx-1 flex h-3 w-3 items-center justify-center border border-[#8a9aa2] bg-[#eef2f4] font-serif text-[11px] font-bold text-[#555]">i</span>
        <span className="font-bold text-[#a60d0d]">21 849,9 (-2,22%)</span>
        <span className="font-bold">22:58:22</span>
        <span>Wall Street Cash (1€)</span>
      </div>
    </div>
    <div className="ml-1 flex h-[47px] shrink-0 border-t-2 border-[#7f9ca9] bg-linear-to-b from-[#a0bdca] to-white">
      <div className="flex min-w-0 flex-1 items-center justify-center gap-[341px]">
        <Select label="Nombre d'unités" value="1000 unités" className="w-[88px]" />
        <Select label="Unité de temps" value="5 minutes" className="w-[91px]" />
      </div>
      <div className="flex w-[277px] items-center justify-between border-l border-[#7f9ca9] bg-white pr-[2px] pl-[11px]">
        <div className="leading-[14px]">
          <div className="font-bold">DOW 5m Mother.of.Dragons v4.1</div>
          <div>Version : <a href="#version" className="text-[#4242f5] underline">27 mars 2020 21:11:28</a></div>
        </div>
        <button type="button" aria-label="Rapport" className="flex h-10 w-[73px] items-center justify-center rounded-md border-2 border-[#bcc6cb] bg-linear-to-b from-white to-[#ececec]"><ReportIcon /></button>
      </div>
    </div>
    <div className="ml-1 grid min-h-0 flex-1 grid-cols-[1fr_51px] grid-rows-[244fr_164fr_409fr] gap-y-[2px] bg-white">
      <EquityPane />
      <PositionPane />
      <PricePane />
    </div>
    <div className="ml-1 h-[19px] shrink-0 bg-white pr-[51px]">
      <div className="relative h-full">
        {timeTicks.map(([x, label, bold]) => (
          <div key={x} className={clsx("absolute top-0 flex -translate-x-1/2 flex-col items-center leading-[14px]", bold && "font-bold")} style={{ left: pct(x, PLOT_W) }}>
            <span className="h-[3px] w-px bg-[#8097a2]" />
            {label}
          </div>
        ))}
      </div>
    </div>
    <div className="ml-1 flex h-9 shrink-0 items-center border-t border-[#7f9ca9] bg-linear-to-b from-[#b0cedb] to-[#9bb9c6] pr-[6px]">
      <button type="button" className="mr-[3px] flex h-6 w-[71px] items-center justify-center gap-[5px] rounded-[3px] bg-linear-to-b from-[#2f9de6] to-[#1f84cc] text-white">
        <svg width="15" height="16" viewBox="0 0 15 16" fill="#fff" stroke="#fff">
          <path d="M12 3L3 8L12 13" fill="none" strokeWidth="1.600" />
          <circle cx="12" cy="3" r="2" /><circle cx="3" cy="8" r="2" /><circle cx="12" cy="13" r="2" />
        </svg>
        Partager
      </button>
      <div className="flex h-4 flex-1 border-y border-[#7f9dab] bg-[#97b5c2]">
        <div className="-my-px flex flex-1">
          <ScrollButton dir="left" />
          <div className="flex-[358_1_0%]" />
          <div className="flex flex-[733_1_0%] flex-col items-center justify-center gap-px rounded-[3px] border border-[#7f9dab] bg-linear-to-b from-[#b9d7e3] to-[#9dbcc9]">
            <span className="h-px w-[7px] bg-[#eef8fc]" /><span className="h-px w-[7px] bg-[#7f9dab]" />
            <span className="h-px w-[7px] bg-[#eef8fc]" /><span className="h-px w-[7px] bg-[#7f9dab]" />
          </div>
          <ScrollButton dir="right" />
        </div>
      </div>
      <div className="ml-[7px] flex items-center">
        <button type="button" aria-label="Réglages du graphique">
          <svg width="17" height="20" viewBox="0 0 17 20">
            <path d="M12.500 0V19M3.500 10V19" stroke="#333" />
            <rect x="9.500" y="3.500" width="6" height="12" fill="#3ccc3c" stroke="#1a8a22" />
            <rect x="0.500" y="11.500" width="6" height="6" fill="#e07070" stroke="#a03030" />
            <g transform="translate(1 2)"><WrenchShape /></g>
          </svg>
        </button>
        <button type="button" aria-label="Zoom automatique" className="ml-2 flex h-[27px] w-[27px] items-center justify-center bg-[#8da0aa]">
          <svg width="20" height="20" viewBox="0 0 20 20">
            <path d="M12 12L18 18.500" stroke="#111" strokeWidth="3.400" />
            <circle cx="7.500" cy="7" r="6" fill="#d8dcde" stroke="#444" />
            <path d="M17.500 3V11M2 17H9" stroke="#1a1aff" strokeWidth="1.500" />
            <path d="M15 4.500L17.500 1L20 4.500ZM15 9.500L17.500 13L20 9.500ZM3.500 14.500L0 17L3.500 19.500ZM7.500 14.500L11 17L7.500 19.500Z" fill="#1a1aff" />
          </svg>
        </button>
        <button type="button" aria-label="Zoom arrière" className="ml-1"><Magnifier sign="-" /></button>
        <button type="button" aria-label="Zoom avant" className="ml-[9px]"><Magnifier sign="+" /></button>
      </div>
    </div>
    <footer className="mb-[2px] ml-1 flex h-[20px] shrink-0 items-center justify-between border-t border-[#7f9ca9] bg-linear-to-b from-[#a3c1ce] to-[#c8e7f2] pr-[5px] pl-[6px]">
      <span>Graphique ProOrder (uniquement pour voir les résultats de ce système de trading)</span>
      <span className="flex items-center gap-[6px]">
        <svg width="17" height="14" viewBox="0 0 17 14">
          <rect x="5.500" y="0.500" width="11" height="12" rx="1" fill="#fff" stroke="#2468b0" />
          <path d="M6 1H16V4H6Z" fill="#2474cc" />
          <path d="M6 9L8.500 6.500L11 10L15 5" fill="none" stroke="#1fae1f" />
          <path d="M11 10L15 5" stroke="#e03030" />
          <path d="M3 1H6V4H9V7H6V10H3V7H0.500V4H3Z" fill="#eef6fb" stroke="#4a86b4" />
        </svg>
        <a href="#dow" className="text-[#4242f5] underline">DOW</a>
      </span>
    </footer>
  </section>
);

const App = () => (
  <div className="flex h-screen flex-col overflow-hidden bg-linear-to-b from-[#54448e] to-[#c76f8f] font-['Liberation_Sans',Arial,sans-serif] text-[11px] text-black">
    {/* strip of desktop above the windows */}
    <div className="h-2 shrink-0 bg-linear-to-r from-[#47398a] via-[#6c5aa2] to-[#33286a]">
      <svg width="160" height="8" viewBox="0 0 160 8" className="ml-[39%]">
        <path d="M8 0H34L44 8H30L26 4L22 8H14Z" fill="#e9e2ee" />
        <path d="M12 0L20 8H26L22 0ZM30 2L38 8H42L34 0Z" fill="#352a4d" />
        <path d="M118 0H144L145 8H134Z" fill="#eeeef6" />
        <path d="M116 0H134L130 6L116 8Z" fill="#3a3164" />
      </svg>
    </div>
    <main className="flex min-h-0 flex-1 pl-[2px]">
      <ReportWindow />
      <ChartWindow />
    </main>
    {/* strip of desktop below the windows */}
    <div className="h-1 shrink-0 bg-linear-to-r from-[#c9698c] via-[#dd86a2] to-[#bf607f]">
      <svg width="480" height="4" viewBox="0 0 480 4" className="ml-[36%]">
        <path d="M0 0H60L70 4H0ZM100 0H130L125 4H104Z" fill="#2f2860" />
        <path d="M20 0H40L50 4H25ZM170 0H210L200 4H160Z" fill="#d8d2e4" />
        <path d="M190 0H272V4H180Z" fill="#c4281e" />
        <path d="M360 0H450L440 4H366Z" fill="#4a3a7c" />
        <path d="M385 0H410L402 4H380Z" fill="#d8cfe4" />
      </svg>
    </div>
  </div>
);

export default App;
